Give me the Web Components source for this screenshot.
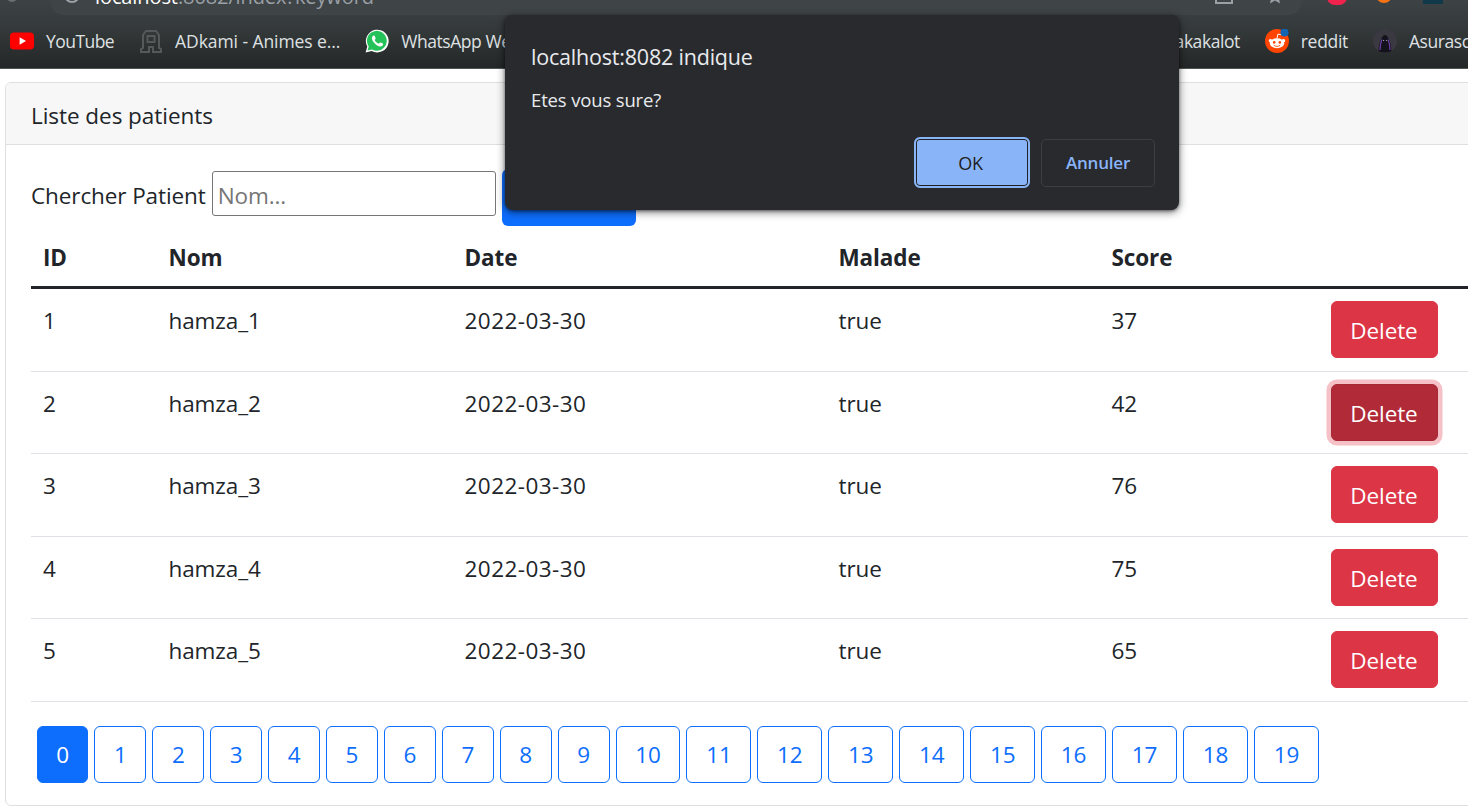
<!DOCTYPE html>
<html lang="fr">
<head>
<meta charset="utf-8">
<title>Liste des patients</title>
<style>
    html, body { margin: 0; height: 100%; overflow: hidden; background: #fff; }
    body { font-family: "Open Sans", "Noto Sans", sans-serif; }
</style>
</head>
<body>
<browser-bar></browser-bar>
<patients-page></patients-page>
<confirm-dialog title-text="localhost:8082 indique" message="Etes vous sure?"></confirm-dialog>

<script>
(function (window, undefined) {
    'use strict'

    const FONT = '"Open Sans", "Noto Sans", sans-serif';

    const ICONS = {
        youtube: `<svg viewBox="0 0 24 24" width="24" height="24"><rect y="3.500" width="24" height="17" rx="4" fill="#f00"/><path d="M9.600 8.200v7.600l6.400-3.800z" fill="#fff"/></svg>`,
        adkami: `<svg viewBox="0 0 24 24" width="24" height="24" fill="none" stroke="#55595a" stroke-width="2"><path d="M2 23v-3l2-1V6l3-4h10l3 4v13l2 1v3h-8v-5H10v5zM8.500 7h7v6h-7z"/></svg>`,
        whatsapp: `<svg viewBox="0 0 24 24" width="24" height="24"><path d="M.6 23.600l1.700-6A11.400 11.400 0 1 1 6.700 22z" fill="#fff"/><path d="M2.500 21.600l1.200-4.200A9.900 9.900 0 1 1 7 20.400z" fill="#25c25a"/><path d="M8.500 6.500c-.5.300-1.700 1.400-1.500 3.300.3 2.500 3.900 7 7.600 7.700 2 .3 3.300-1 3.500-2 .1-.5 0-.8-.3-1l-2.300-1.100c-.4-.1-.6.100-1.400 1.100-.2.200-.4.200-.7.100-1.500-.6-2.900-1.800-3.700-3.300-.1-.3 0-.5.800-1.300.2-.3.200-.5.100-.8L9.600 6.800c-.2-.4-.6-.5-1.100-.3z" fill="#fff"/></svg>`,
        reddit: `<svg viewBox="0 0 24 24" width="24" height="24"><circle cx="12" cy="12" r="12" fill="#ff4500"/><ellipse cx="12" cy="14.200" rx="7.200" ry="5" fill="#fff"/><circle cx="5.500" cy="11.800" r="1.800" fill="#fff"/><circle cx="18.500" cy="11.800" r="1.800" fill="#fff"/><circle cx="9.200" cy="13.400" r="1.300" fill="#ff4500"/><circle cx="14.800" cy="13.400" r="1.300" fill="#ff4500"/><path d="M8.800 16.300c1.800 1.400 4.600 1.400 6.400 0" fill="none" stroke="#ff4500" stroke-width=".9"/><path d="M12 9.200l1-4.200 3 .8" fill="none" stroke="#fff"/><circle cx="19.500" cy="3.500" r="4" fill="#0f65b4"/></svg>`,
        asura: `<svg viewBox="0 0 24 24" width="24" height="24"><circle cx="12" cy="12" r="12" fill="#3a3840"/><path d="M5.500 22c.5-6 1-8 2-10 1-3 2.500-6 4.500-6s3.500 3 4.500 6c1 2 1.500 4 2 10-4 2-9 2-13 0z" fill="#14121a"/><path d="M7 21c0-5 .8-8 2-10.500M17 21c0-5-.8-8-2-10.500" fill="none" stroke="#6b3fa8" stroke-width="1.200"/><path d="M10 11.500h1.200M13 11.500h1.200" stroke="#a9a4b5" stroke-width=".9"/></svg>`
    };

    class BookmarkItem extends HTMLElement {
        constructor() {
            super();
            const styles = `
            <style>
                :host { display: flex; align-items: center; gap: 12px; flex: none; }
                .icon { width: 24px; height: 24px; flex: none; }
                svg { display: block; }
                .label { font: 17.500px/24px ${FONT}; color: #dfe1e3; white-space: nowrap; letter-spacing: var(--ls, -.45px); }
            </style>
            `;
            const icon = ICONS[this.getAttribute('icon')] || '';
            this._shadow = this.attachShadow({ mode: 'open' });
            this._shadow.innerHTML = styles + `<span class="icon">${icon}</span><span class="label"><slot></slot></span>`;
        }
    }

    class BrowserBar extends HTMLElement {
        constructor() {
            super();
            const styles = `
            <style>
                :host {
                    display: block; height: 69px; box-sizing: border-box; overflow: hidden;
                    background: linear-gradient(#3d4244, #353a3c 26px, #242727);
                    border-bottom: 1px solid #4f5755;
                }
                .top { display: flex; align-items: flex-end; height: 15px; overflow: hidden; }
                .back { width: 10px; height: 10px; margin: 0 0 13px 7px; border-radius: 50%; background: #6b6f72; flex: none; }
                .url {
                    display: flex; align-items: flex-end; box-sizing: border-box;
                    width: 1252px; height: 15px; margin-left: 33px; padding: 0 19px 0 14px;
                    background: #3f4446; border-radius: 0 0 14px 14px; flex: none; overflow: hidden;
                }
                .globe { width: 12px; height: 12px; border: 2px solid #9aa0a6; border-radius: 50%; margin: 0 15px 12px 0; flex: none; }
                .addr { font: 20px/22px ${FONT}; color: #9aa0a6; white-space: nowrap; letter-spacing: -.1px; margin-bottom: 7px; }
                .addr b { font-weight: 400; color: #fff; }
                .square { width: 14px; height: 12px; border: 2px solid #9aa0a6; margin: 0 34px 11px auto; flex: none; }
                .star { display: block; margin-bottom: 11px; flex: none; }
                .ext { flex: none; }
                .red { width: 20px; height: 16px; margin: 0 0 10px 25px; background: #f0224e; border-radius: 0 0 8px 8px; }
                .orange { width: 16px; height: 16px; margin: 0 0 12px 29px; background: #f97316; border-radius: 50%; }
                .blue { width: 20px; height: 16px; margin: 0 0 11px 31px; background: #103a4a; }
                .bar { display: flex; align-items: center; height: 36px; padding-left: 10px; margin-top: 8px; }
                .left { display: flex; gap: 25px; }
                .right { display: flex; gap: 25px; margin-left: auto; }
                .last { width: 95px; overflow: hidden; flex: none; }
            </style>
            `;
            const template = `
                <div class="top">
                    <span class="back"></span>
                    <div class="url">
                        <span class="globe"></span>
                        <span class="addr"><b>localhost</b>:8082/index?keyword</span>
                        <span class="square"></span>
                        <svg class="star" viewBox="0 0 16 16" width="16" height="16"><path d="M8 0l2.400 5.300 5.600.6-4.200 3.800 1.200 5.700L8 12.500l-5 2.900 1.200-5.700L0 5.900l5.600-.6z" fill="#9aa0a6"/></svg>
                    </div>
                    <span class="ext red"></span>
                    <span class="ext orange"></span>
                    <span class="ext blue"></span>
                </div>
                <div class="bar">
                    <div class="left">
                        <bookmark-item icon="youtube" style="--ls:-.55px">YouTube</bookmark-item>
                        <bookmark-item icon="adkami" style="--ls:-.08px">ADkami - Animes e...</bookmark-item>
                        <bookmark-item icon="whatsapp">WhatsApp Web</bookmark-item>
                    </div>
                    <div class="right">
                        <bookmark-item>Mangakakalot</bookmark-item>
                        <bookmark-item icon="reddit" style="--ls:-.3px">reddit</bookmark-item>
                        <div class="last"><bookmark-item icon="asura">Asurascans</bookmark-item></div>
                    </div>
                </div>
            `;
            this._shadow = this.attachShadow({ mode: 'open' });
            this._shadow.innerHTML = styles + template;
        }
    }

    class DeleteButton extends HTMLElement {
        constructor() {
            super();
            const styles = `
            <style>
                :host { display: block; width: 107px; }
                button {
                    display: block; width: 107px; height: 57px; box-sizing: border-box; padding: 3px 0 0;
                    border: 1.500px solid #dc3545; border-radius: 6px; background: #dc3545; color: #fff;
                    font: 22.500px/36px ${FONT}; letter-spacing: -.1px;
                }
                :host([focused]) button {
                    background: #b02a37; border-color: #a52834;
                    box-shadow: 0 0 0 4.500px #f5c0c6; outline: 0;
                }
            </style>
            `;
            this._shadow = this.attachShadow({ mode: 'open' });
            this._shadow.innerHTML = styles + `<button type="button"><slot></slot></button>`;
        }
    }

    class PatientTable extends HTMLElement {
        constructor() {
            super();
            const styles = `
            <style>
                :host { display: block; }
                table { border-collapse: collapse; table-layout: fixed; width: 1460px; color: #212529; font: 22.500px/36px ${FONT}; letter-spacing: -.1px; }
                th { text-align: left; font-weight: 700; padding: 13px 12px 10px; border-bottom: 3px solid #212529; }
                td { padding: 12px 12px 12.500px; vertical-align: top; border-bottom: 1.500px solid #dee2e6; height: 57px; }
                td span { display: block; margin-top: 2px; }
                td .date { letter-spacing: .45px; }
            </style>
            `;
            const rows = [[1, 37], [2, 42], [3, 76], [4, 75], [5, 65]].map(([id, score]) => `
                <tr>
                    <td><span>${id}</span></td>
                    <td><span>hamza_${id}</span></td>
                    <td><span class="date">2022-03-30</span></td>
                    <td><span>true</span></td>
                    <td><span>${score}</span></td>
                    <td><delete-button ${id === 2 ? 'focused' : ''}>Delete</delete-button></td>
                </tr>`).join('');
            const template = `
                <table>
                    <colgroup>
                        <col style="width:125.500px"><col style="width:296px"><col style="width:374px">
                        <col style="width:273px"><col style="width:219px"><col>
                    </colgroup>
                    <thead><tr><th>ID</th><th>Nom</th><th>Date</th><th>Malade</th><th>Score</th><th></th></tr></thead>
                    <tbody>${rows}</tbody>
                </table>
            `;
            this._shadow = this.attachShadow({ mode: 'open' });
            this._shadow.innerHTML = styles + template;
        }
    }

    class PageLinks extends HTMLElement {
        constructor() {
            super();
            const styles = `
            <style>
                :host { display: flex; gap: 6px; padding: 24px 0 0 5.600px; }
                a {
                    display: block; box-sizing: border-box; width: 51.900px; height: 57px;
                    border: 1.500px solid #0d6efd; border-radius: 6px; color: #0d6efd; text-align: center;
                    font: 22.500px/56px ${FONT}; letter-spacing: -.1px;
                }
                a.wide { width: 64.950px; }
                a.active { background: #0d6efd; color: #fff; }
            </style>
            `;
            let links = '';
            for (let i = 0; i < 20; i++) {
                links += `<a class="${i > 9 ? 'wide' : ''} ${i === 0 ? 'active' : ''}">${i}</a>`;
            }
            this._shadow = this.attachShadow({ mode: 'open' });
            this._shadow.innerHTML = styles + links;
        }
    }

    class PatientsPage extends HTMLElement {
        constructor() {
            super();
            const styles = `
            <style>
                :host { display: block; padding: 13px 0 0 5px; width: 1500px; }
                .card { border: 1.500px solid #dfdfdf; border-radius: 6px; height: 724px; box-sizing: border-box; }
                .head {
                    height: 62px; box-sizing: border-box; padding: 0 25px;
                    background: #f7f7f7; border-bottom: 1.500px solid #dfdfdf; border-radius: 5px 5px 0 0;
                    font: 22.500px/66px ${FONT}; color: #212529; letter-spacing: -.05px;
                }
                .body { padding: 25px 25px 0; }
                form { display: flex; align-items: flex-start; height: 57px; font: 22.500px/36px ${FONT}; color: #212529; letter-spacing: -.1px; }
                label { margin: 8px 6px 0 0; }
                input {
                    width: 284px; height: 45px; box-sizing: border-box; margin: 1px 6px 0 0; padding: 3px 5px 0;
                    border: 1px solid #767676; border-radius: 3px; font: 22.500px ${FONT}; letter-spacing: -.1px; outline: 0;
                }
                input::placeholder { color: #757575; opacity: 1; }
                .go { width: 134px; height: 57px; border: 0; border-radius: 6px; background: #0d6efd; margin-top: -1px; flex: none; }
            </style>
            `;
            const template = `
                <div class="card">
                    <div class="head">Liste des patients</div>
                    <div class="body">
                        <form>
                            <label>Chercher Patient</label>
                            <input type="text" placeholder="Nom...">
                            <button class="go" type="button" aria-label="Chercher"></button>
                        </form>
                        <patient-table></patient-table>
                        <page-links></page-links>
                    </div>
                </div>
            `;
            this._shadow = this.attachShadow({ mode: 'open' });
            this._shadow.innerHTML = styles + template;
        }
    }

    class ConfirmDialog extends HTMLElement {
        constructor() {
            super();
            const styles = `
            <style>
                :host {
                    position: absolute; left: 505px; top: 15px; width: 674px; height: 195px; box-sizing: border-box;
                    padding: 26px 24px 0 26px; background: #292a2d; border-radius: 8px; color: #e8eaed;
                    box-shadow: 0 2px 8px rgba(0, 0, 0, .55), 0 1px 3px rgba(0, 0, 0, .4);
                    font-family: ${FONT};
                }
                .title { font-size: 21.500px; line-height: 32px; letter-spacing: -.2px; }
                .msg { font-size: 18.500px; line-height: 26px; margin-top: 14px; letter-spacing: -.15px; }
                .btns { display: flex; justify-content: flex-end; align-items: center; gap: 11px; margin-top: 24px; }
                button { box-sizing: border-box; font: 600 17px ${FONT}; letter-spacing: -.2px; padding: 0; }
                .ok {
                    width: 116px; height: 51px; background: #8ab4f8; color: #202124; font-weight: 500; font-size: 18px; padding-right: 3px;
                    border: 2px solid #8ab4f8; border-radius: 6px; box-shadow: inset 0 0 0 1px #202124;
                }
                .no { width: 114px; height: 48px; background: transparent; color: #8ab4f8; border: 1px solid #3c3e42; border-radius: 5px; }
            </style>
            `;
            const template = `
                <div class="title">${this.getAttribute('title-text')}</div>
                <div class="msg">${this.getAttribute('message')}</div>
                <div class="btns">
                    <button class="ok" type="button">OK</button>
                    <button class="no" type="button">Annuler</button>
                </div>
            `;
            this._shadow = this.attachShadow({ mode: 'open' });
            this._shadow.innerHTML = styles + template;
        }
    }

    customElements.define('bookmark-item', BookmarkItem);
    customElements.define('browser-bar', BrowserBar);
    customElements.define('delete-button', DeleteButton);
    customElements.define('patient-table', PatientTable);
    customElements.define('page-links', PageLinks);
    customElements.define('patients-page', PatientsPage);
    customElements.define('confirm-dialog', ConfirmDialog);

})(window);
</script>
</body>
</html>
